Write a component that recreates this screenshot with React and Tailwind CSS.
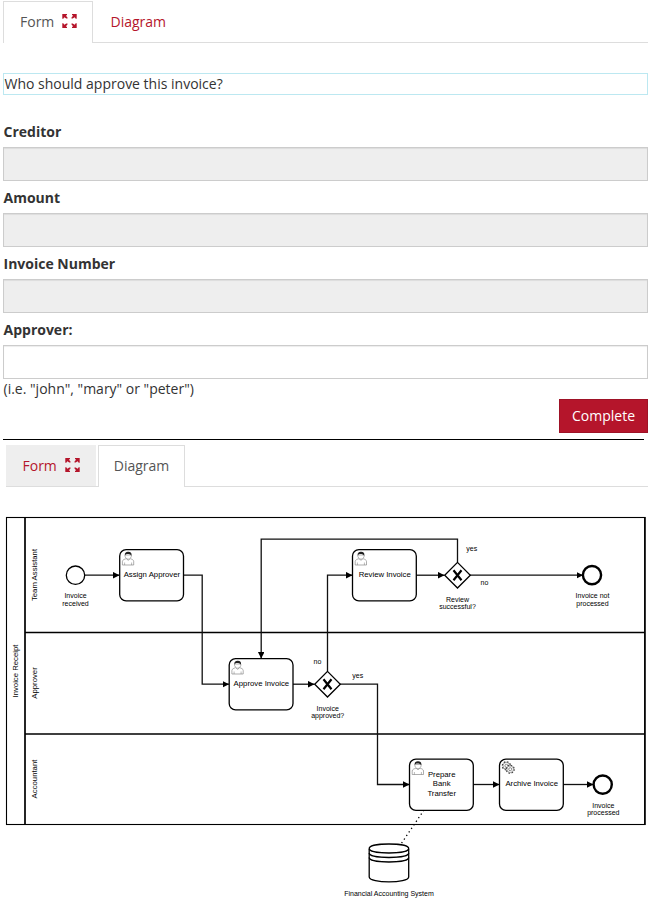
const sans = "font-['Open_Sans','Noto_Sans',sans-serif]";

const corner = "M0.300 0H5V1L3.900 1.700 5.500 3.400V4.600H4.300L2.300 3.200 1.300 4.700H0.300z";

function ExpandIcon() {
  return (
    <svg width="15" height="14" viewBox="0 0 15 14" className="mb-0.5 shrink-0 fill-[#b5152b]">
      <path d={corner} />
      <path d={corner} transform="matrix(-1 0 0 1 15 0)" />
      <path d={corner} transform="matrix(1 0 0 -1 0 14)" />
      <path d={corner} transform="matrix(-1 0 0 -1 15 14)" />
    </svg>
  );
}

function Field({ label, disabled }) {
  return (
    <label className="block h-[66px]">
      <span className="block h-[25px] pl-[0.5px] text-[14px] leading-5 font-bold">{label}</span>
      <input
        disabled={disabled}
        className={
          "block h-[34px] w-full border border-[#ccc] shadow-[inset_0_1px_1px_rgba(0,0,0,0.075)] " +
          (disabled ? "bg-[#eee]" : "bg-white")
        }
      />
    </label>
  );
}

function FormPanel() {
  return (
    <section className="ml-[3px] w-[645px] pt-px">
      <nav className="flex h-[42px] items-stretch text-[14px]">
        <button className="flex w-[90px] items-center gap-2 border border-b-0 border-[#ddd] pb-0.5 pl-4 text-[#555]">
          Form <ExpandIcon />
        </button>
        <button className="flex-1 border-b border-[#ddd] pl-[17.5px] text-left text-[#b5152b]">Diagram</button>
      </nav>
      <p className="mt-[30px] h-[22px] border border-[#bce8f1] pl-[0.5px] text-[14px] leading-5">Who should approve this invoice?</p>
      <div className="mt-[27px]">
        <Field label="Creditor" disabled />
        <Field label="Amount" disabled />
        <Field label="Invoice Number" disabled />
        <Field label="Approver:" />
      </div>
      <p className="-mt-[7px] h-5 pl-[0.5px] text-[14px] leading-5">(i.e. "john", "mary" or "peter")</p>
      <div className="flex justify-end">
        <button className="h-[34px] w-[89px] border border-[#9e1226] bg-[#b5152b] text-[14px] leading-5 text-white">Complete</button>
      </div>
    </section>
  );
}

function Task({ x, y, lines, children }) {
  return (
    <g transform={`translate(${x} ${y})`}>
      <rect width="63.800" height="51.200" rx="6.400" fill="white" stroke="black" strokeWidth="1.300" />
      {children}
      <Label x={32.2} y={27.2 - (lines.length - 1) * 4.6} lines={lines} size={7.75} step={9.2} />
    </g>
  );
}

function Label({ x, y, lines, size = 7, step = 7.7 }) {
  return (
    <text textAnchor="middle" fontSize={size} fill="black">
      {lines.map((line, i) => (
        <tspan key={line} x={x} y={y + i * step}>{line}</tspan>
      ))}
    </text>
  );
}

function Person() {
  return (
    <g>
      <path
        d="M2.700 15.300V11.800C2.700 10.200 4.700 9.600 6.500 8.900L8.500 10.600 10.500 8.900C12.300 9.600 14 10.200 14 11.800V15.300z"
        fill="white" stroke="#777" strokeWidth="0.600"
      />
      <path d="M4.900 15.300V12.800M11.900 15.300V12.800" stroke="#777" strokeWidth="0.500" />
      <path d="M5.300 5.300C5.100 7.600 6.500 9.300 8.500 9.500 10.500 9.300 11.900 7.600 11.700 5.300z" fill="white" stroke="#777" strokeWidth="0.550" />
      <path d="M5.100 5.700C4.900 3.200 6.300 2 8.500 2.100 10.900 2 12.200 3.300 11.800 5.700 10.700 5 9.800 4.100 8.500 4.400 7 4 6 4.700 5.100 5.700z" fill="#222" />
    </g>
  );
}

function Gears() {
  return (
    <g fill="white" stroke="#444">
      <circle cx="6.900" cy="6.600" r="4" strokeWidth="1.400" strokeDasharray="1.600 1.540" />
      <circle cx="6.900" cy="6.600" r="3.400" strokeWidth="0.500" />
      <circle cx="6.900" cy="6.600" r="1.500" strokeWidth="0.600" />
      <circle cx="10.700" cy="10" r="3.900" strokeWidth="1.400" strokeDasharray="1.550 1.510" />
      <circle cx="10.700" cy="10" r="3.300" strokeWidth="0.500" />
      <circle cx="10.700" cy="10" r="1.500" strokeWidth="0.600" />
    </g>
  );
}

function Gateway({ x, y }) {
  return (
    <g transform={`translate(${x} ${y})`} stroke="black">
      <path d="M0-12.800 12.800 0 0 12.800-12.800 0z" fill="white" strokeWidth="1.300" />
      <path d="M-4-5 4 5M4-5-4 5" strokeWidth="2.200" />
    </g>
  );
}

function Flow({ d }) {
  return <path d={d} fill="none" stroke="#111" strokeWidth="1.300" markerEnd="url(#arrow)" />;
}

function ProcessDiagram() {
  return (
    <svg width="653" height="393" viewBox="0 510 653 393" className="block font-['Liberation_Sans',Arial,sans-serif]">
      <defs>
        <marker id="arrow" markerUnits="userSpaceOnUse" markerWidth="8" markerHeight="8" refX="6.500" refY="3.250" orient="auto">
          <path d="M0 0 6.500 3.250 0 6.500z" />
        </marker>
      </defs>
      <g fill="none" stroke="black">
        <rect x="6.500" y="517.500" width="638.500" height="307" strokeWidth="1.100" />
        <path d="M25 517V825M25 632.500H645M25 734H645" strokeWidth="1.700" />
        <path d="M644.800 517V825" strokeWidth="1.500" />
      </g>
      <g fontSize="7.750" textAnchor="middle">
        <text transform="translate(18 671) rotate(-90)">Invoice Receipt</text>
        <text transform="translate(37 575) rotate(-90)">Team Assistant</text>
        <text transform="translate(37 683) rotate(-90)">Approver</text>
        <text transform="translate(37 779) rotate(-90)">Accountant</text>
      </g>
      <Flow d="M85 575.200H119.500" />
      <Flow d="M184 575.200H202.200V684.200H229" />
      <Flow d="M293 684.200H314.500" />
      <Flow d="M327.500 671V575.200H352.500" />
      <Flow d="M416 575.200H444.500" />
      <Flow d="M457.500 562V539.200H261.200V658.500" />
      <Flow d="M470 575.200H583" />
      <Flow d="M340 684.200H377.500V784.500H409.500" />
      <Flow d="M473 784.500H499.500" />
      <Flow d="M563 784.500H593.500" />
      <path d="M424 810 401 844" stroke="black" strokeWidth="1.300" strokeDasharray="1.300 3" />

      <g fill="white" stroke="black">
        <circle cx="75.500" cy="575.200" r="9.200" strokeWidth="1.300" />
        <circle cx="592" cy="575.100" r="9.100" strokeWidth="2.400" />
        <circle cx="602.700" cy="784.600" r="9.100" strokeWidth="2.400" />
      </g>
      <Task x={119.700} y={549.700} lines={["Assign Approver"]}><Person /></Task>
      <Task x={352.500} y={549.700} lines={["Review Invoice"]}><Person /></Task>
      <Task x={229.200} y={658.700} lines={["Approve Invoice"]}><Person /></Task>
      <Task x={409.500} y={759.200} lines={["Prepare", "Bank", "Transfer"]}><Person /></Task>
      <Task x={499.500} y={759.200} lines={["Archive Invoice"]}><Gears /></Task>
      <Gateway x={457.500} y={575.200} />
      <Gateway x={327.500} y={684.200} />

      <Label x={75.500} y={598} lines={["Invoice", "received"]} />
      <Label x={592.500} y={598} lines={["Invoice not", "processed"]} />
      <Label x={457.500} y={602} step={7} lines={["Review", "successful?"]} />
      <Label x={327.700} y={711} step={7} lines={["Invoice", "approved?"]} />
      <Label x={603.300} y={808} step={7} lines={["Invoice", "processed"]} />
      <Label x={471.700} y={551} lines={["yes"]} />
      <Label x={484.500} y={585} lines={["no"]} />
      <Label x={317.500} y={664} lines={["no"]} />
      <Label x={357.800} y={678} lines={["yes"]} />
      <Label x={389} y={896} lines={["Financial Accounting System"]} />

      <g fill="white" stroke="black" strokeWidth="1.300">
        <path d="M369.200 849v28c0 6.500 39.500 6.500 39.500 0v-28" />
        <path d="M369.200 848.500c0-6 39.500-6 39.500 0s-39.500 6-39.500 0" />
        <path d="M369.200 853c0 6 39.500 6 39.500 0M369.200 857.500c0 6 39.500 6 39.500 0" fill="none" />
      </g>
    </svg>
  );
}

export default function App() {
  return (
    <main className={`h-[903px] w-[653px] overflow-hidden bg-white text-[#333] ${sans}`}>
      <FormPanel />
      <hr className="mt-[6px] ml-[3px] w-[641px] border-t border-black" />
      <nav className="mt-[5px] ml-[6px] flex h-[42px] w-[642px] text-[14px]">
        <button className="flex w-[90px] items-center gap-2 border-b border-[#ddd] bg-[#eee] pl-[16.5px] text-[#b5152b]">
          Form <ExpandIcon />
        </button>
        <span className="w-[2px] border-b border-[#ddd]" />
        <button className="w-[87px] border border-b-0 border-[#ddd] pb-0.5 text-[#555]">Diagram</button>
        <span className="flex-1 border-b border-[#ddd]" />
      </nav>
      <section className="mt-[23px]">
        <ProcessDiagram />
      </section>
    </main>
  );
}
